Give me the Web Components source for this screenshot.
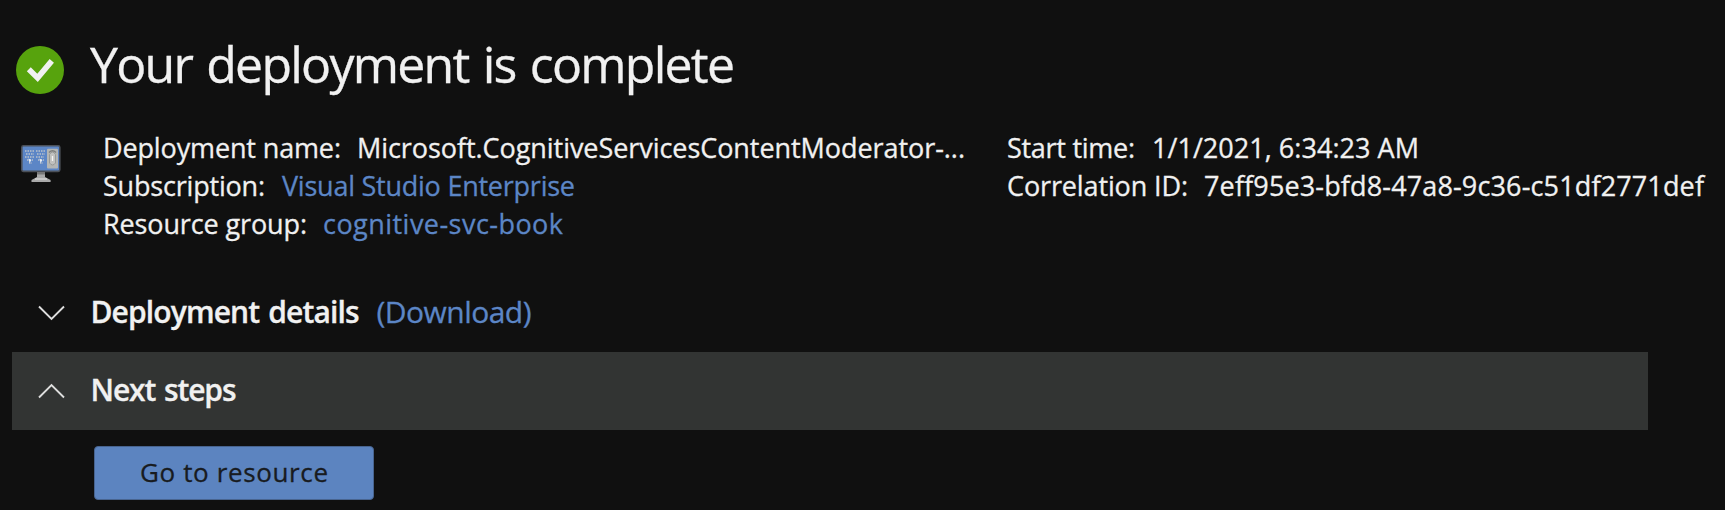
<!DOCTYPE html>
<html lang="en">
<head>
<meta charset="utf-8">
<title>Deployment</title>
<style>
html,body{margin:0;background:#101010;}
body{width:1725px;height:510px;overflow:hidden;font-family:"Open Sans","Noto Sans",sans-serif;color:#f1f1f1;-webkit-text-stroke:.3px currentColor;}
</style>
</head>
<body>
<deployment-page></deployment-page>
<script>
/* Text run tracked out or in to an exact advance width. */
class TrackedText extends HTMLElement{
  connectedCallback(){
    const root=this.attachShadow({mode:"open"});
    root.innerHTML=`<style>:host{display:block;white-space:pre;flex:none}span{display:inline-block}</style><span><slot></slot></span>`;
    const span=root.querySelector("span");
    const width=+this.getAttribute("width");
    const count=this.textContent.length;
    const natural=span.getBoundingClientRect().width;
    span.style.letterSpacing=((width-natural)/(count-1))+"px";
    this.style.width=width+"px";
  }
}

class StatusIcon extends HTMLElement{
  connectedCallback(){
    this.attachShadow({mode:"open"}).innerHTML=`
<style>:host{display:block;width:48px;height:48px}svg{display:block}</style>
<svg width="48" height="48" viewBox="0 0 48 48"><circle cx="24" cy="24" r="24" fill="#57a30d"/>
<path d="M12.800 23.300 L21.600 31.900 L35.800 14.900" fill="none" stroke="#f1f1f1" stroke-width="5.600" stroke-linejoin="miter"/></svg>`;
  }
}

class MonitorIcon extends HTMLElement{
  connectedCallback(){
    this.attachShadow({mode:"open"}).innerHTML=`
<style>:host{display:block;width:40px;height:38px}svg{display:block}</style>
<svg width="40" height="38" viewBox="0 0 40 38">
<rect x=".8" y=".8" width="38" height="25.600" rx="1.600" fill="#5c86c6" stroke="#4b5058" stroke-width="1.600"/>
<path d="M16 27h8v5l5.600 3v2H10.500v-2L16 32z" fill="#a9a9a9"/>
<path d="M16 27h8v2.500h-8z" fill="#777"/>
<path d="M14 34h12" stroke="#d2d2d2" stroke-width="1.500"/>
<g fill="none" stroke="#b9c2cc" stroke-width="1.600" stroke-dasharray="1.500 1">
<path d="M4 6h9M5 9h8M4 12h9M6 15h6M8 18h3"/><path d="M15 6h9M16 9h8M15 12h8M17 15h6M19 18h3"/></g>
<path d="M7.500 13.500l3 1.500-2 3zM18.500 13.500l3 1.500-2 3z" fill="#e8edf2"/>
<rect x="26" y="3.800" width="11" height="19.700" rx="1" fill="#b4b6b4"/>
<path d="M28.500 9.500q3-5 6 0v8.500q-3 4-6 0z" fill="#c0c1bf" stroke="#969896" stroke-width="1"/>
<path d="M28 7.500q3.500-3.500 7 0" fill="none" stroke="#7d7f7d" stroke-width="1.500"/>
<path d="M31.500 11v5" stroke="#f4f4f4" stroke-width="1.300"/>
</svg>`;
  }
}

class InfoRow extends HTMLElement{
  connectedCallback(){
    const g=n=>this.getAttribute(n);
    this.attachShadow({mode:"open"}).innerHTML=`
<style>:host{display:flex;height:38px;line-height:38px;font-size:27px}
.value{margin-left:${g("gap")}px}.link{color:#5c86c6}</style>
<tracked-text width="${g("label-width")}">${g("label")}</tracked-text>
<tracked-text class="value ${this.hasAttribute("link")?"link":""}" width="${g("value-width")}">${g("value")}</tracked-text>`;
  }
}

class SectionBar extends HTMLElement{
  connectedCallback(){
    const open=this.hasAttribute("open");
    this.attachShadow({mode:"open"}).innerHTML=`
<style>:host{display:flex;box-sizing:border-box;width:1636px;height:78px;margin-left:12px;padding:0 0 2px 25.500px;align-items:center;font-size:30px;line-height:40px;word-spacing:2px}
:host([open]){background:#323433}
svg{display:block;flex:none;margin-right:26px;margin-top:1px}
.title{display:block;font-weight:600}</style>
<svg width="27" height="16" viewBox="0 0 27 16"><path d="${open?"M1 14.500L13.500 2L26 14.500":"M1 1.500L13.500 14L26 1.500"}" fill="none" stroke="#dedede" stroke-width="1.900"/></svg>
<tracked-text class="title" width="${this.getAttribute("title-width")}">${this.getAttribute("heading")}</tracked-text><slot></slot>`;
  }
}

class ActionButton extends HTMLElement{
  connectedCallback(){
    this.attachShadow({mode:"open"}).innerHTML=`
<style>:host{display:block}
button{display:flex;justify-content:center;align-items:flex-start;box-sizing:border-box;width:280px;height:54px;padding:7px 0 0;border:1px solid #48648f;border-radius:4px;background:#5c84c0;color:#181b20;font:26px/36px "Open Sans","Noto Sans",sans-serif}</style>
<button><tracked-text width="188">Go to resource</tracked-text></button>`;
  }
}

class DeploymentPage extends HTMLElement{
  connectedCallback(){
    this.attachShadow({mode:"open"}).innerHTML=`
<style>
:host{display:flex;flex-direction:column;height:510px;box-sizing:border-box;padding-top:34px}
header{display:flex;height:95px;padding-left:16px}
status-icon{margin:12px 26px 0 0}
h1{margin:0;font-size:50px;font-weight:400;line-height:60px;word-spacing:3px}
.info{display:flex;height:145px;padding-left:20px}
monitor-icon{margin:16px 42px 0 1px}
.left{width:904px;flex:none}
.download{font-size:30px;color:#5c86c6;margin-left:17px}
action-button{margin:16px 0 0 94px}
</style>
<header><status-icon></status-icon><h1><tracked-text width="645">Your deployment is complete</tracked-text></h1></header>
<div class="info"><monitor-icon></monitor-icon>
<div class="left">
<info-row label="Deployment name:" label-width="238" gap="16" value="Microsoft.CognitiveServicesContentModerator-..." value-width="608"></info-row>
<info-row label="Subscription:" label-width="162" gap="17" value="Visual Studio Enterprise" value-width="293" link></info-row>
<info-row label="Resource group:" label-width="204" gap="16" value="cognitive-svc-book" value-width="240" link></info-row>
</div>
<div>
<info-row label="Start time:" label-width="128" gap="17" value="1/1/2021, 6:34:23 AM" value-width="267"></info-row>
<info-row label="Correlation ID:" label-width="181" gap="16" value="7eff95e3-bfd8-47a8-9c36-c51df2771def" value-width="500"></info-row>
</div></div>
<section-bar heading="Deployment details" title-width="269"><tracked-text class="download" width="155">(Download)</tracked-text></section-bar>
<section-bar heading="Next steps" title-width="146" open></section-bar>
<action-button></action-button>`;
  }
}
customElements.define("tracked-text",TrackedText);
customElements.define("status-icon",StatusIcon);
customElements.define("monitor-icon",MonitorIcon);
customElements.define("info-row",InfoRow);
customElements.define("section-bar",SectionBar);
customElements.define("action-button",ActionButton);
customElements.define("deployment-page",DeploymentPage);
</script>
</body>
</html>
